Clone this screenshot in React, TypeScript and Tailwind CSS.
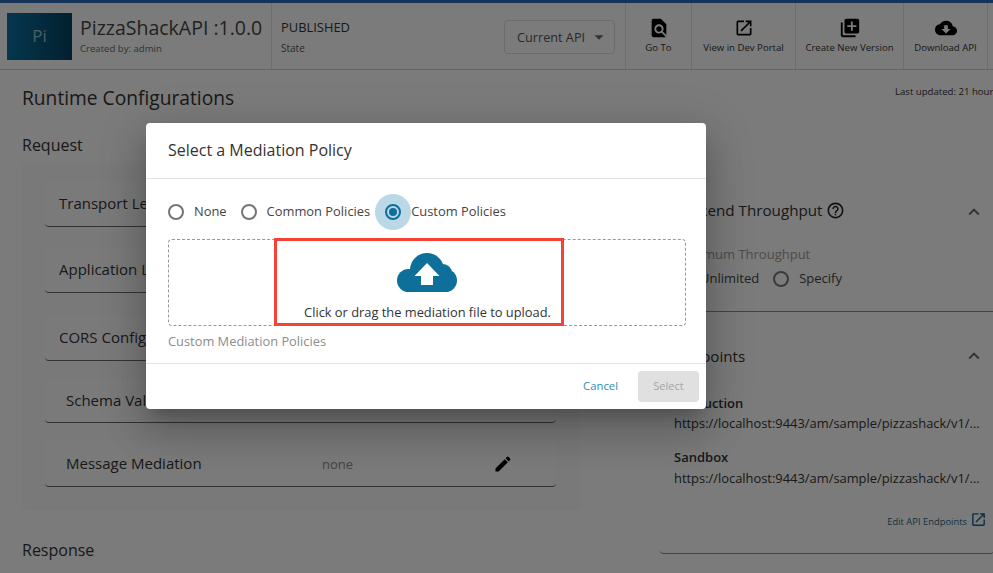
import React from "react";
import { MdFindInPage, MdOpenInNew, MdLibraryAdd, MdCloudDownload, MdEdit, MdHelpOutline, MdExpandLess, MdArrowDropDown } from "react-icons/md";

function Action({ icon, label, w }: { icon: React.ReactNode; label: string; w: string }) {
  return (
    <div className={`${w} h-full border-l border-[#dcdcdc] flex flex-col items-center pt-[11px] shrink-0`}>
      <div className="h-[27px] flex items-center text-black">{icon}</div>
      <div className="text-[9.6px] leading-[15px] -mt-[1px] text-[#333] whitespace-nowrap">{label}</div>
    </div>
  );
}

function Row({ label, box, value, edit, indent }: { label: string; box: string; value?: string; edit?: boolean; indent?: boolean }) {
  return (
    <div className={`${box} relative flex items-center bg-[#f5f5f5] rounded-[4px] border-b border-[#666] ${indent ? "pl-[21px]" : "pl-[14px]"}`}>
      <span className="text-[15px] text-[#333]">{label}</span>
      {value && <span className="absolute left-[277px] top-[14px] text-[13px] leading-[18px] text-[#888]">{value}</span>}
      {edit && <MdEdit className="absolute right-[43px] top-[13px] text-black" size={20} />}
    </div>
  );
}

function Radio({ checked }: { checked?: boolean }) {
  return (
    <span className={`w-[16px] h-[16px] rounded-full border-2 flex items-center justify-center shrink-0 ${checked ? "border-[#0f6f9b]" : "border-[#757575]"}`}>
      {checked && <span className="w-[8px] h-[8px] rounded-full bg-[#0f6f9b]" />}
    </span>
  );
}

function UploadCloud() {
  return (
    <svg width="60" height="39" viewBox="0 0 60 39" className="mt-[13px] shrink-0">
      <g fill="#0f6f9b">
        <circle cx="11.5" cy="27.5" r="11.5" />
        <circle cx="48.5" cy="27.5" r="11.5" />
        <circle cx="30" cy="17" r="17" />
        <circle cx="46" cy="20" r="9" />
        <rect x="11" y="20" width="38" height="19" />
      </g>
      <polygon fill="#fff" points="30,10 42.5,23 36,23 36,32 24,32 24,23 17.5,23" />
    </svg>
  );
}

export default function App() {
  return (
    <div className="relative w-[993px] h-[573px] overflow-hidden bg-[#f6f6f6] font-['Open_Sans',sans-serif] text-[#222]">
      <div className="h-[3px] bg-[#2d66b2]" />
      <header className="h-[67px] border-b border-[#c8c8c8] flex items-stretch">
        <div className="w-[271px] shrink-0 flex items-center pl-[7px]">
          <div className="w-[65px] h-[47px] bg-gradient-to-r from-[#0b6e9c] to-[#04425f] text-white/60 text-[17px] flex items-center justify-center">Pi</div>
          <div className="ml-[8px] -mt-[1px]">
            <div className="text-[19.5px] leading-[26px] text-[#444] whitespace-nowrap">PizzaShackAPI :1.0.0</div>
            <div className="text-[9.6px] leading-[14px] text-[#666] mt-[1px]">Created by: admin</div>
          </div>
        </div>
        <div className="w-[233px] shrink-0 border-l border-[#dcdcdc] pl-[9px] pt-[15px]">
          <div className="text-[12.9px] leading-[18px] text-[#333]">PUBLISHED</div>
          <div className="text-[10px] leading-[14px] text-[#555] mt-[5px]">State</div>
        </div>
        <div className="w-[121px] shrink-0 pt-[17px]">
          <div className="w-[111px] h-[34px] border border-[#d8d8d8] rounded-[4px] flex items-center pl-[12px] pt-[1px] text-[12.7px] text-[#555]">
            Current API
            <MdArrowDropDown size={22} className="ml-[3px] -mt-[2px] text-[#666]" />
          </div>
        </div>
        <Action icon={<MdFindInPage size={22} />} label="Go To" w="w-[66px]" />
        <Action icon={<MdOpenInNew size={20} />} label="View in Dev Portal" w="w-[104px]" />
        <Action icon={<MdLibraryAdd size={22} />} label="Create New Version" w="w-[108px]" />
        <Action icon={<MdCloudDownload size={22} />} label="Download API" w="w-[84px]" />
        <div className="border-l border-[#dcdcdc] flex-1" />
      </header>

      <main className="flex pl-[22px]">
        <div className="w-[558px] shrink-0">
          <h1 className="text-[19.2px] leading-[28px] mt-[14px] text-[#333]">Runtime Configurations</h1>
          <h2 className="text-[16px] leading-[24px] mt-[21px] text-[#333]">Request</h2>
          <div className="mt-[6px] bg-[#f3f3f3] pl-[23px] pr-[24px] pt-[18px] rounded-[4px] h-[347px]">
            <Row label="Transport Level Security" box="h-[46px]" />
            <Row label="Application Level Security" box="h-[46px] mt-[20px]" />
            <Row label="CORS Configuration" box="h-[46px] mt-[22px]" />
            <Row label="Schema Validation" box="h-[44px] mt-[18px]" indent />
            <Row label="Message Mediation" box="h-[46px] mt-[18px]" value="none" edit indent />
          </div>
          <h2 className="text-[16px] leading-[24px] mt-[28px] text-[#333]">Response</h2>
        </div>
        <div className="flex-1 min-w-0 pl-[80px]">
          <div className="text-[9.6px] leading-[14px] text-[#333] mt-[15px] whitespace-nowrap pl-[235px] overflow-hidden">Last updated: 21 hours ago</div>
          <div className="mt-[74px] w-[334px] h-[381px] border-b border-[#888] rounded-[4px] bg-[#f7f7f7] pl-[14px] relative">
            <div className="pt-[25px] flex items-center text-[15.2px] leading-[24px] text-[#333] whitespace-nowrap">
              Backend Throughput <MdHelpOutline size={19} className="ml-[3px] text-[#222]" />
            </div>
            <MdExpandLess size={22} className="absolute left-[303px] top-[28px] text-[#666]" />
            <div className="text-[13px] leading-[18px] text-[#999] mt-[23px]">Maximum Throughput</div>
            <div className="flex items-center mt-[7px] text-[13px] text-[#444] h-[18px]">
              <Radio /><span className="ml-[10px]">Unlimited</span>
              <span className="ml-[14px]"><Radio /></span><span className="ml-[10px]">Specify</span>
            </div>
            <div className="border-b border-[#888] mt-[23px] -ml-[14px]" />
            <div className="pt-[32px] text-[15.2px] leading-[24px] text-[#333]">Endpoints</div>
            <MdExpandLess size={22} className="absolute left-[303px] top-[172px] text-[#666]" />
            <div className="mt-[26px] text-[13px] leading-[18px] font-semibold text-[#333]">Production</div>
            <div className="text-[12.9px] leading-[18px] text-[#333] mt-[2px] whitespace-nowrap">https://localhost:9443/am/sample/pizzashack/v1/...</div>
            <div className="mt-[16px] text-[13px] leading-[18px] font-semibold text-[#333]">Sandbox</div>
            <div className="text-[12.9px] leading-[18px] text-[#333] mt-[3px] whitespace-nowrap">https://localhost:9443/am/sample/pizzashack/v1/...</div>
            <div className="flex items-center justify-end pr-[7px] mt-[28px] text-[9.4px] leading-[14px] text-[#2b5f7c]">
              Edit API Endpoints <MdOpenInNew size={17} className="ml-[3px] -mt-[6px] text-[#0f5f85]" />
            </div>
          </div>
        </div>
      </main>

      <div className="absolute inset-0 bg-black/50" />

      <div className="absolute left-[146px] top-[123px] w-[560px] h-[286px] bg-white rounded-[4px] shadow-[0_11px_15px_-7px_rgba(0,0,0,0.2),0_24px_38px_3px_rgba(0,0,0,0.14),0_9px_46px_8px_rgba(0,0,0,0.12)] flex flex-col">
        <div className="h-[56px] shrink-0 border-b border-[#e2e2e2] px-[22px] pb-[2px] flex items-center text-[16px] text-[#333]">Select a Mediation Policy</div>
        <div className="px-[22px] flex-1">
          <div className="h-[60px] pt-[5px] flex items-center text-[12.9px] text-[#444]">
            <Radio /><span className="ml-[10px]">None</span>
            <span className="ml-[14px]"><Radio /></span><span className="ml-[10px]">Common Policies</span>
            <span className="relative ml-[15px] w-[16px] h-[16px]">
              <span className="absolute -left-[10px] -top-[10px] w-[36px] h-[36px] rounded-full bg-[#bad8e6]" />
              <span className="absolute inset-0"><Radio checked /></span>
            </span>
            <span className="ml-[10px]">Custom Policies</span>
          </div>
          <div className="w-[518px] h-[87px] border border-dashed border-[#999] rounded-[4px] flex flex-col items-center">
            <UploadCloud />
            <div className="text-[12.85px] leading-[18px] text-[#333] ml-[1px] mt-[11px]">Click or drag the mediation file to upload.</div>
          </div>
          <div className="text-[12.85px] leading-[18px] text-[#8c8c8c] mt-[6px]">Custom Mediation Policies</div>
        </div>
        <div className="h-[46px] shrink-0 border-t border-[#e2e2e2] flex items-center justify-end pr-[7px]">
          <span className="text-[11.3px] text-[#2f8db8] mr-[20px]">Cancel</span>
          <span className="w-[61px] h-[31px] rounded-[4px] bg-[#e0e0e0] text-[11px] text-[#a6a6a6] flex items-center justify-center">Select</span>
        </div>
      </div>

      <div className="absolute left-[274px] top-[238px] w-[290px] h-[88px] border-[3px] border-[#f44336]" />
    </div>
  );
}
